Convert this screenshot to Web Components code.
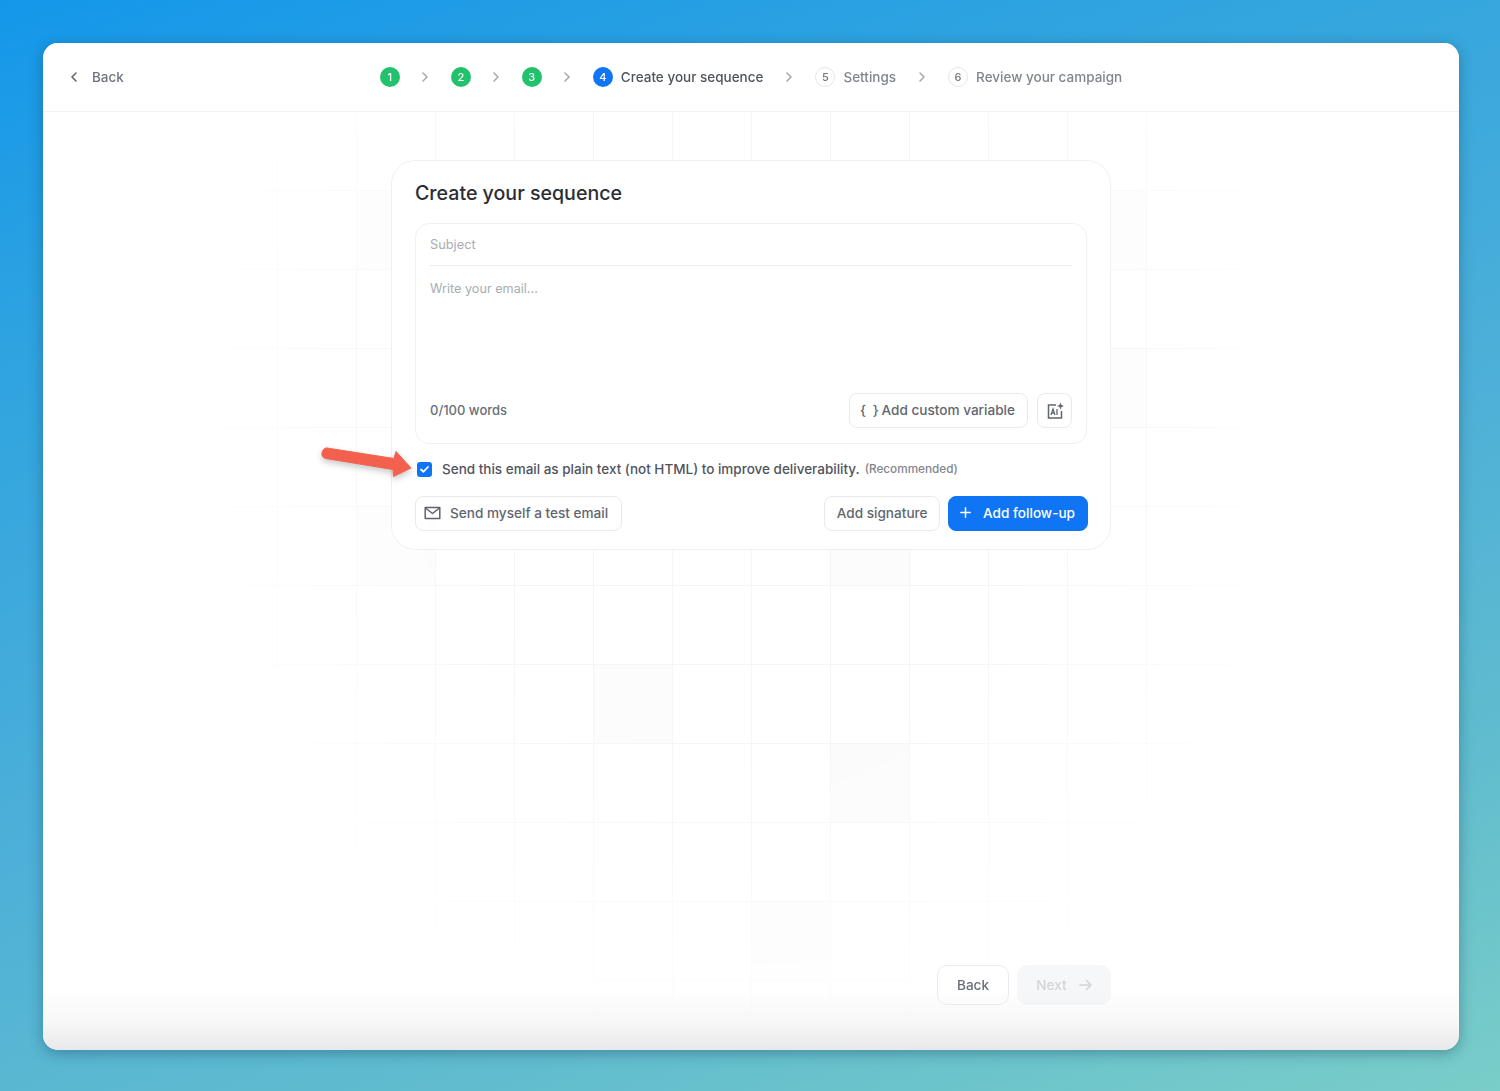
<!DOCTYPE html>
<html lang="en">
<head>
<meta charset="utf-8">
<title>Create your sequence</title>
<style>
    html, body { margin: 0; height: 100%; }
    body {
        height: 1091px;
        overflow: hidden;
        box-sizing: border-box;
        padding: 43px 41px 41px 43px;
        background: linear-gradient(162deg, #1497ea 0%, #2ea3e0 22%, #4eb0d8 55%, #60bcce 78%, #7acdc8 100%);
        font-family: Inter, "Liberation Sans", sans-serif;
        color: #3f4350;
    }
</style>
</head>
<body>
<app-window>
    <step-bar slot="header"></step-bar>
    <sequence-card></sequence-card>
    <page-actions slot="footer"></page-actions>
</app-window>

<script>
const buttonStyles = `
    .btn {
        display: inline-flex;
        align-items: center;
        box-sizing: border-box;
        height: 35px;
        padding: 0 12px 2px;
        background: #fff;
        border: 1px solid #e9eaee;
        border-radius: 8px;
        font: 500 13.6px Inter, "Liberation Sans", sans-serif;
        color: #62666f;
        white-space: nowrap;
    }
    svg { display: block; flex: none; }
`;

class AppWindow extends HTMLElement {
    constructor() {
        super();
        this.attachShadow({ mode: "open" }).innerHTML = `
            <style>
                :host {
                    display: flex;
                    flex-direction: column;
                    position: relative;
                    height: 1007px;
                    background: #fff;
                    border-radius: 15px;
                    overflow: hidden;
                    box-shadow: 0 3px 14px rgba(20, 60, 90, .4);
                }
                .main {
                    flex: 1;
                    position: relative;
                    display: flex;
                    flex-direction: column;
                    align-items: center;
                    padding: 48px 0 45px;
                }
                .fade {
                    position: absolute;
                    left: 0; right: 0; bottom: 0;
                    height: 62px;
                    background: linear-gradient(rgba(233,233,235,0), rgba(233,233,235,.35) 55%, #e9e9eb);
                    pointer-events: none;
                }
                .foot { position: relative; margin-top: auto; width: 720px; }
            </style>
            <slot name="header"></slot>
            <div class="main">
                <grid-backdrop></grid-backdrop>
                <slot></slot>
                <div class="foot"><slot name="footer"></slot></div>
            </div>
            <div class="fade"></div>
        `;
    }
}

class GridBackdrop extends HTMLElement {
    constructor() {
        super();
        const size = 79;
        // x/y of the main area, the backdrop grid starts left of the card
        const xs = [234, 313, 392, 471, 550, 629, 708, 787, 866, 945, 1024, 1103];
        const ys = [0, 79, 158, 237, 316, 395, 474, 553, 632, 711, 790, 869];
        const tints = [
            [313, 395, .012], [787, 395, .012], [550, 553, .012], [787, 632, .014],
            [708, 790, .016], [1024, 79, .01], [313, 79, .01], [1024, 237, .01]
        ];
        const lines = xs.map(x => `<path d="M${x + .5} 0V900"/>`).join("")
            + ys.map(y => `<path d="M150 ${y - .5}H1200"/>`).join("");
        const cells = tints.map(([x, y, o]) =>
            `<rect x="${x}" y="${y}" width="${size}" height="${size}" fill="#000" fill-opacity="${o}"/>`).join("");
        const mask = "radial-gradient(ellipse 600px 680px at 50% 32%, #000 50%, transparent 100%)";
        this.attachShadow({ mode: "open" }).innerHTML = `
            <style>
                :host {
                    display: block;
                    position: absolute;
                    inset: 0;
                    -webkit-mask-image: ${mask};
                    mask-image: ${mask};
                }
                svg { display: block; }
                g { stroke: #f4f5f7; stroke-width: 1; fill: none; }
            </style>
            <svg width="1416" height="938">${cells}<g>${lines}</g></svg>
        `;
    }
}

class StepBar extends HTMLElement {
    constructor() {
        super();
        const steps = [
            { n: 1, state: "done" },
            { n: 2, state: "done" },
            { n: 3, state: "done" },
            { n: 4, state: "current", label: "Create your sequence" },
            { n: 5, state: "todo", label: "Settings" },
            { n: 6, state: "todo", label: "Review your campaign" }
        ];
        const chevron = `<svg class="sep" width="8" height="10" viewBox="0 0 8 10" fill="none" stroke="#a4a7af" stroke-width="1.5" stroke-linecap="round" stroke-linejoin="round"><path d="M2 1l4 4-4 4"/></svg>`;
        const items = steps.map(s => `
            <span class="step ${s.state}">
                <span class="dot">${s.n}</span>
                ${s.label ? `<span class="label">${s.label}</span>` : ""}
            </span>`).join(chevron);
        this.attachShadow({ mode: "open" }).innerHTML = `
            <style>
                :host {
                    display: grid;
                    grid-template-columns: 1fr auto 1fr;
                    align-items: center;
                    box-sizing: border-box;
                    height: 69px;
                    padding-bottom: 1px;
                    border-bottom: 1px solid #f1f2f4;
                    position: relative;
                    background: #fff;
                    font: 500 13.5px Inter, "Liberation Sans", sans-serif;
                    filter: blur(.35px);
                }
                .back {
                    display: flex;
                    align-items: center;
                    gap: 14px;
                    padding-left: 27px;
                    color: #70747e;
                }
                .steps { display: flex; align-items: center; gap: 20px; }
                .step { display: flex; align-items: center; gap: 8px; }
                .dot {
                    display: flex;
                    align-items: center;
                    justify-content: center;
                    box-sizing: border-box;
                    width: 20px;
                    height: 20px;
                    border-radius: 50%;
                    font-size: 11px;
                    color: #fff;
                }
                .done .dot { background: #22c16b; }
                .current .dot { background: #0f75f5; }
                .todo .dot { background: #fff; border: 1px solid #e6e7ea; color: #70747e; }
                .current .label { color: #4f535e; }
                .todo .label { color: #81858e; }
                .sep { display: block; flex: none; margin: 0 1.5px; }
                .current + .sep, .current + .sep + .todo + .sep { margin: 0 2px; }
            </style>
            <div class="back">
                <svg width="8" height="10" viewBox="0 0 8 10" fill="none" stroke="#62666f" stroke-width="1.6" stroke-linecap="round" stroke-linejoin="round"><path d="M6 1L2 5l4 4"/></svg>
                <span>Back</span>
            </div>
            <div class="steps">${items}</div>
            <div></div>
        `;
    }
}

class EmailEditor extends HTMLElement {
    constructor() {
        super();
        this.attachShadow({ mode: "open" }).innerHTML = `
            <style>
                ${buttonStyles}
                :host {
                    display: flex;
                    flex-direction: column;
                    box-sizing: border-box;
                    height: 221px;
                    padding: 0 14px 15px;
                    background: #fff;
                    border: 1px solid #f0f1f3;
                    border-radius: 14px;
                }
                .subject {
                    height: 41px;
                    line-height: 41px;
                    border-bottom: 1px solid #eceded;
                    font-size: 12.8px;
                    color: #a9acb3;
                }
                .body {
                    flex: 1;
                    padding-top: 15px;
                    font-size: 12.65px;
                    line-height: 16px;
                    color: #a9acb3;
                }
                .foot { display: flex; align-items: center; gap: 9px; }
                .count { margin: 0 auto 2px 0; font-size: 13px; font-weight: 500; color: #6a6e78; }
                .var { gap: 1px; padding-left: 10px; }
                .ai { width: 35px; padding: 0; justify-content: center; }
                .braces { letter-spacing: 1.6px; }
            </style>
            <div class="subject">Subject</div>
            <div class="body">Write your email...</div>
            <div class="foot">
                <span class="count">0/100 words</span>
                <span class="btn var"><span class="braces">{ }</span><span>Add custom variable</span></span>
                <span class="btn ai">
                    <svg width="20" height="20" viewBox="0 0 20 20" fill="none">
                        <path d="M11 4H3.500v13h13V10" stroke="#62666f" stroke-width="1.500"/>
                        <path d="M15.500 1.500l1 2.500 2.500 1-2.500 1-1 2.500-1-2.500-2.500-1 2.500-1z" fill="#62666f"/>
                        <path d="M6 14l2-6 2 6M6.800 12.200h2.400M12 8v6" stroke="#62666f" stroke-width="1.300"/>
                    </svg>
                </span>
            </div>
        `;
    }
}

class PlainTextOption extends HTMLElement {
    constructor() {
        super();
        this.attachShadow({ mode: "open" }).innerHTML = `
            <style>
                :host {
                    display: flex;
                    align-items: center;
                    position: relative;
                    height: 17px;
                    font: 500 13.5px Inter, "Liberation Sans", sans-serif;
                    color: #50545f;
                }
                .box {
                    display: flex;
                    align-items: center;
                    justify-content: center;
                    width: 15px;
                    height: 15px;
                    margin: 0 10px 0 2px;
                    background: #0f75f5;
                    border-radius: 3px;
                }
                .text { margin-bottom: 2px; }
                .hint { margin: 0 0 1px 5px; font-size: 11.75px; color: #81858e; }
                .arrow {
                    position: absolute;
                    left: -95px;
                    top: -15px;
                    filter: drop-shadow(0 3px 3px rgba(0, 0, 0, .22));
                }
            </style>
            <span class="box">
                <svg width="11" height="9" viewBox="0 0 11 9" fill="none" stroke="#fff" stroke-width="1.800" stroke-linecap="round" stroke-linejoin="round"><path d="M2 4.500l2.500 2.200 4.500-4.700"/></svg>
            </span>
            <span class="text">Send this email as plain text (not HTML) to improve deliverability.</span>
            <span class="hint">(Recommended)</span>
            <svg class="arrow" width="100" height="40" viewBox="0 0 100 40" fill="#f4604e" stroke="#f4604e" stroke-linejoin="round">
                <path d="M7 2L74 12.500l2-7L91 22l-17.500 8.500-.5-7L6 12.500C3 12 1.500 9.500 2 7c.5-3 2.500-5.500 5-5z"/>
            </svg>
        `;
    }
}

class SequenceCard extends HTMLElement {
    constructor() {
        super();
        this.attachShadow({ mode: "open" }).innerHTML = `
            <style>
                ${buttonStyles}
                :host {
                    display: block;
                    position: relative;
                    box-sizing: border-box;
                    width: 720px;
                    height: 390px;
                    padding: 0 23px;
                    background: #fff;
                    border: 1px solid #eff0f2;
                    border-radius: 24px;
                    filter: blur(.35px);
                }
                h2 {
                    margin: 0;
                    height: 62px;
                    line-height: 64px;
                    font-size: 19.6px;
                    font-weight: 500;
                    color: #2b2d35;
                }
                plain-text-option { margin: 17px 0 18px; }
                .row { display: flex; align-items: center; gap: 8px; margin-right: -1px; }
                .mail { gap: 9px; margin-right: auto; padding: 0 13px 2px 8px; }
                .sig { padding: 0 11.500px 2px; }
                .primary {
                    gap: 12px;
                    padding-left: 11px;
                    background: #0f75f5;
                    border-color: #0f75f5;
                    color: #fff;
                }
            </style>
            <h2>Create your sequence</h2>
            <email-editor></email-editor>
            <plain-text-option></plain-text-option>
            <div class="row">
                <span class="btn mail">
                    <svg width="17" height="14" viewBox="0 0 17 14" fill="none" stroke="#5f636e" stroke-width="1.500" stroke-linejoin="round"><path d="M1.200 1.500h14.600v11H1.200z"/><path d="M1.500 2l7 5.500 7-5.500"/></svg>
                    <span>Send myself a test email</span>
                </span>
                <span class="btn sig">Add signature</span>
                <span class="btn primary">
                    <svg width="11" height="11" viewBox="0 0 11 11" fill="none" stroke="#fff" stroke-width="1.500" stroke-linecap="round"><path d="M5.500 .8v9.400M.8 5.500h9.400"/></svg>
                    <span>Add follow-up</span>
                </span>
            </div>
        `;
    }
}

class PageActions extends HTMLElement {
    constructor() {
        super();
        this.attachShadow({ mode: "open" }).innerHTML = `
            <style>
                ${buttonStyles}
                :host { display: flex; justify-content: flex-end; gap: 8px; filter: blur(.35px); }
                .btn { height: 40px; padding-bottom: 0; border-radius: 10px; justify-content: center; }
                .back { width: 72px; color: #6a6e78; }
                .next {
                    width: 94px;
                    gap: 12px;
                    background: #f6f7f8;
                    border-color: #f6f7f8;
                    color: #d2d4d8;
                }
            </style>
            <span class="btn back">Back</span>
            <span class="btn next">
                <span>Next</span>
                <svg width="13" height="12" viewBox="0 0 13 12" fill="none" stroke="#d2d4d8" stroke-width="1.500" stroke-linecap="round" stroke-linejoin="round"><path d="M1 6h11M7.500 1.500L12 6l-4.500 4.500"/></svg>
            </span>
        `;
    }
}

customElements.define("app-window", AppWindow);
customElements.define("grid-backdrop", GridBackdrop);
customElements.define("step-bar", StepBar);
customElements.define("email-editor", EmailEditor);
customElements.define("plain-text-option", PlainTextOption);
customElements.define("sequence-card", SequenceCard);
customElements.define("page-actions", PageActions);
</script>
</body>
</html>
